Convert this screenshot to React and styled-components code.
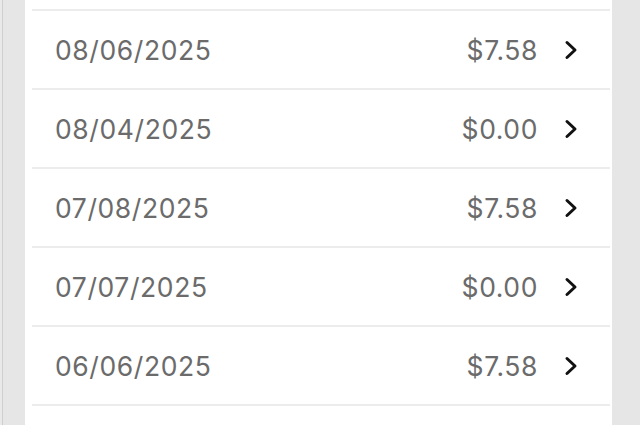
import styled, { createGlobalStyle } from "styled-components";

const GlobalStyle = createGlobalStyle`
  html, body {
    margin: 0;
    padding: 0;
    background: #e6e6e6;
    font-family: Inter, "Liberation Sans", sans-serif;
  }
`;

const Page = styled.div`
  height: 425px;
  overflow: hidden;
  display: flex;
  padding-left: 25px;
  padding-right: 28px;
  background: linear-gradient(
    to right,
    #e9e9e9 0,
    #e9e9e9 2px,
    #cfcfcf 2px,
    #cfcfcf 3px,
    #e6e6e6 3px
  );
`;

const Panel = styled.div`
  flex: 1;
  background: #fff;
  padding-top: 9px;
`;

const Row = styled.div`
  display: flex;
  align-items: center;
  height: 77px;
  margin: 0 2px 0 7px;
  border-top: 2px solid #ececec;
  padding: 0 30px 0 23px;
  color: #6b6b6b;
  font-size: 26.5px;
  letter-spacing: 0.6px;
`;

const DateText = styled.span`
  flex: 1;
`;

const Amount = styled.span`
  margin-right: 24px;
`;

const Chevron = () => (
  <svg width="18" height="22" viewBox="0 0 18 22">
    <path
      d="M5 3.5 L13 11 L5 18.5"
      fill="none"
      stroke="#111"
      strokeWidth="3"
      strokeLinecap="round"
      strokeLinejoin="round"
    />
  </svg>
);

const rows = [
  { date: "08/06/2025", amount: "$7.58" },
  { date: "08/04/2025", amount: "$0.00" },
  { date: "07/08/2025", amount: "$7.58" },
  { date: "07/07/2025", amount: "$0.00" },
  { date: "06/06/2025", amount: "$7.58" },
  { date: "", amount: "" },
];

export default function App() {
  return (
    <>
      <GlobalStyle />
      <Page>
        <Panel>
          {rows.map((r, i) => (
            <Row key={i}>
              <DateText>{r.date}</DateText>
              {r.amount && <Amount>{r.amount}</Amount>}
              {r.amount && <Chevron />}
            </Row>
          ))}
        </Panel>
      </Page>
    </>
  );
}
